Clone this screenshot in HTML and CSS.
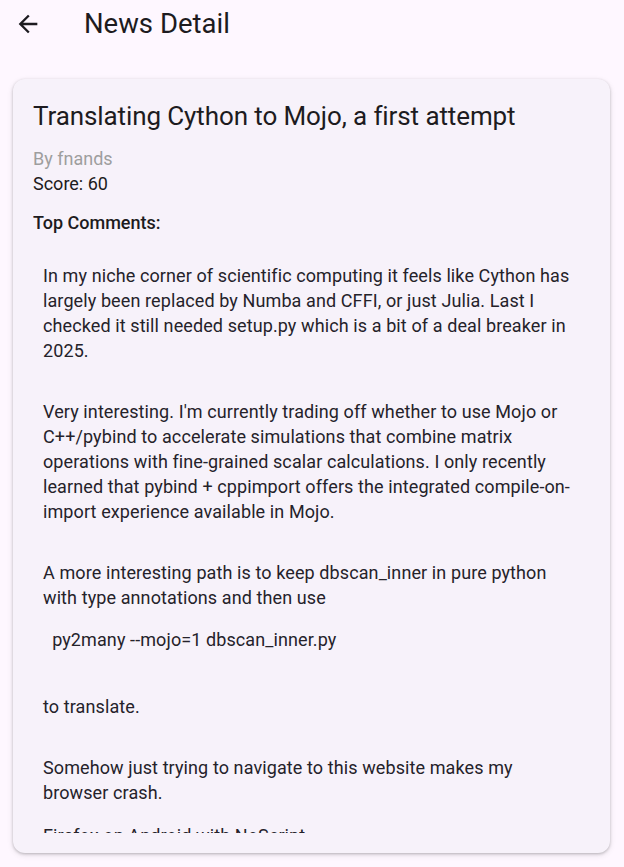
FILE: index.html
```html
<!DOCTYPE html>
<html>
<head>
<meta charset="utf-8">
<link rel="stylesheet" href="styles.css">
</head>
<body>
<div class="appbar">
  <svg class="back" width="28" height="28" viewBox="0 0 24 24"><path d="M20 11H7.83l5.59-5.59L12 4l-8 8 8 8 1.41-1.41L7.83 13H20v-2z" fill="#1d1b20"/></svg>
  <div class="title">News Detail</div>
</div>
<div class="page">
  <div class="card">
    <div class="scroll">
      <div class="headline">Translating Cython to Mojo, a first attempt</div>
      <div class="by">By fnands</div>
      <div class="score">Score: 60</div>
      <div class="top">Top Comments:</div>
      <div class="comment first">
        <p>In my niche corner of scientific computing it feels like Cython has<br>largely been replaced by Numba and CFFI, or just Julia. Last I<br>checked it still needed setup.py which is a bit of a deal breaker in<br>2025.</p>
      </div>
      <div class="comment">
        <p>Very interesting. I'm currently trading off whether to use Mojo or<br>C++/pybind to accelerate simulations that combine matrix<br>operations with fine-grained scalar calculations. I only recently<br>learned that pybind + cppimport offers the integrated compile-on-<br>import experience available in Mojo.</p>
      </div>
      <div class="comment">
        <p>A more interesting path is to keep dbscan_inner in pure python<br>with type annotations and then use</p>
        <pre class="code">  py2many --mojo=1 dbscan_inner.py</pre>
        <p class="after-code">to translate.</p>
      </div>
      <div class="comment">
        <p>Somehow just trying to navigate to this website makes my<br>browser crash.</p>
        <p class="next">Firefox on Android with NoScript</p>
      </div>
    </div>
  </div>
</div>
</body>
</html>
```

FILE: styles.css
```css
html, body {
  margin: 0;
  padding: 0;
}
body {
  background: #fef7ff;
  font-family: Roboto, "Noto Sans", sans-serif;
  color: #1d1b20;
  width: 624px;
  height: 867px;
  overflow: hidden;
}
.appbar {
  height: 48px;
  display: flex;
  align-items: center;
}
.back {
  margin-left: 14px;
  flex: none;
}
.title {
  margin-left: 42px;
  font-size: 27.5px;
  line-height: 32px;
  color: #1d1b20;
}
.page {
  padding: 31px 14px 14px 13px;
}
.card {
  background: #f7f2fa;
  border-radius: 12px;
  box-shadow: 0 1px 3px rgba(0,0,0,0.22), 0 2px 6px rgba(0,0,0,0.10);
  padding: 20px;
  height: 734px;
}
.scroll {
  height: 734px;
  overflow: hidden;
}
.headline {
  font-size: 26px;
  line-height: 34px;
  font-weight: 400;
  letter-spacing: -0.1px;
}
.by {
  margin-top: 12.5px;
  font-size: 18px;
  line-height: 25px;
  color: #9e9e9e;
}
.score {
  font-size: 18px;
  line-height: 25px;
}
.top {
  margin-top: 14px;
  font-size: 18px;
  line-height: 25px;
  font-weight: 500;
}
.comment {
  padding: 0 10px;
  margin-top: 36px;
  font-size: 18px;
  line-height: 25px;
  color: #25222a;
  letter-spacing: 0.1px;
}
.comment.first {
  margin-top: 28px;
}
.comment p {
  margin: 0;
  white-space: nowrap;
}
.code {
  margin: 17px 0 0 0;
  font-family: Roboto, "Noto Sans", sans-serif;
  font-size: 18px;
  line-height: 25px;
  white-space: pre;
}
.comment p.after-code {
  margin-top: 42px;
}
.comment p.next {
  margin-top: 18px;
}
```
